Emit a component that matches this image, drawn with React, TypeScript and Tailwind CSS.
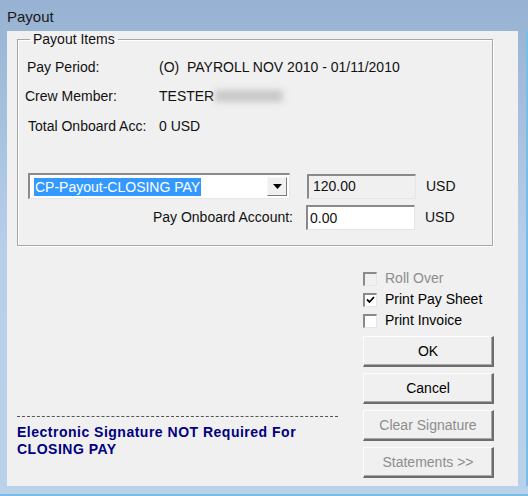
import React from "react";

const font = { fontFamily: '"Liberation Sans", Arial, sans-serif' };

// ── Win32 bits ────────────────────────────────────────────────────────────────

function Sunken({ className = "", children }: { className?: string; children?: React.ReactNode }) {
  return (
    <div
      className={`border-t-2 border-l-2 border-b border-r border-t-[#8a8a8a] border-l-[#8a8a8a] border-b-[#e6e6e6] border-r-[#e6e6e6] ${className}`}
    >
      {children}
    </div>
  );
}

function Check({ label, checked = false, disabled = false }: { label: string; checked?: boolean; disabled?: boolean }) {
  return (
    <div className="h-[21px] flex items-center gap-[8px]">
      <div
        className={`w-[14px] h-[14px] flex items-center justify-center border-t-2 border-l-2 border-b border-r border-t-[#8a8a8a] border-l-[#8a8a8a] border-b-[#e6e6e6] border-r-[#e6e6e6] ${
          disabled ? "bg-[#f0f0f0]" : "bg-white"
        }`}
      >
        {checked && (
          <svg width="9" height="8" viewBox="0 0 9 8">
            <path d="M1 3.5 L3.5 6 L8 1" stroke="#000" strokeWidth="1.8" fill="none" />
          </svg>
        )}
      </div>
      <span className={disabled ? "text-[#8d8d8d]" : "text-black"}>{label}</span>
    </div>
  );
}

function Btn({ label, disabled = false }: { label: string; disabled?: boolean }) {
  return (
    <div
      className={`h-[31px] w-[131px] flex items-center justify-center bg-[#f0f0f0] border-t border-l border-b-2 border-r-2 border-t-[#fdfdfd] border-l-[#fdfdfd] border-b-[#6d6d6d] border-r-[#6d6d6d] shadow-[inset_-1px_-1px_0_#a8a8a8] ${
        disabled ? "text-[#8d8d8d]" : "text-black"
      }`}
    >
      {label}
    </div>
  );
}

// ── Page ──────────────────────────────────────────────────────────────────────

export default function App() {
  return (
    <div
      className="w-[528px] h-[496px] flex flex-col bg-gradient-to-b from-[#97b2d2] via-[#b7cfe9] to-[#bad1ea] text-[14px] leading-[17px] text-[#111]"
      style={font}
    >
      {/* title */}
      <div className="h-[31px] shrink-0 pl-[7px] flex items-center text-[15px] text-[#1a1a1a] pt-[2px]">Payout</div>

      <div className="flex-1 flex">
        <div className="ml-[7px] w-[511px] h-[455px] bg-[#f0f0f0] pl-[10px]">
          {/* ── Payout Items ── */}
          <fieldset className="w-[476px] h-[215px] border border-[#a7a7a7] shadow-[inset_1px_1px_0_#fff,1px_1px_0_#fff]">
            <legend className="ml-[12px] px-[3px] text-[#111]">Payout Items</legend>

            <div className="flex flex-col pl-[9px]">
              <div className="mt-[9px] h-[20px] flex items-center">
                <span className="w-[132px]">Pay Period:</span>
                <span>(O)&nbsp; PAYROLL NOV 2010 - 01/11/2010</span>
              </div>
              <div className="mt-[9px] h-[20px] flex items-center">
                <span className="w-[132px] -ml-[2px]">Crew Member:</span>
                <span className="ml-[2px]">TESTER</span>
                <span className="ml-[1px] w-[68px] h-[12px] bg-[#c9c9c9] blur-[3px]" />
              </div>
              <div className="mt-[10px] h-[20px] flex items-center">
                <span className="w-[132px] ml-[1px] -mr-[1px]">Total Onboard Acc:</span>
                <span>0 USD</span>
              </div>

              <div className="mt-[37px] flex items-center">
                <Sunken className="w-[262px] h-[26px] ml-[1px] bg-white flex items-center justify-between pl-[4px] pr-[2px]">
                  <span className="bg-[#3399ff] text-white px-[1px] leading-[18px]">CP-Payout-CLOSING PAY</span>
                  <div className="w-[20px] h-[19px] flex items-center justify-center bg-[#f0f0f0] border-t border-l border-b border-r border-t-[#f8f8f8] border-l-[#f8f8f8] border-b-[#7a7a7a] border-r-[#7a7a7a]">
                    <svg width="9" height="5" viewBox="0 0 9 5">
                      <path d="M0 0 H9 L4.5 5 Z" fill="#000" />
                    </svg>
                  </div>
                </Sunken>
                <Sunken className="ml-[17px] w-[109px] h-[25px] bg-[#f0f0f0] flex items-center pl-[4px]">120.00</Sunken>
                <span className="ml-[10px]">USD</span>
              </div>

              <div className="mt-[6px] flex items-center">
                <span className="w-[266px] text-right">Pay Onboard Account:</span>
                <Sunken className="ml-[13px] w-[109px] h-[25px] bg-white flex items-center pl-[2px]">0.00</Sunken>
                <span className="ml-[10px]">USD</span>
              </div>
            </div>
          </fieldset>

          {/* ── Bottom ── */}
          <div className="mt-[22px] flex">
            <div className="w-[321px] pt-[148px] flex flex-col">
              <div className="border-t border-dashed border-[#555]" />
              <p className="mt-[7px] font-bold text-[#000080] text-[14px] leading-[17px] tracking-[0.5px]">
                Electronic Signature NOT Required For
                <br />
                CLOSING PAY
              </p>
            </div>

            <div className="ml-[25px] flex flex-col">
              <Check label="Roll Over" disabled />
              <Check label="Print Pay Sheet" checked />
              <Check label="Print Invoice" />
              <div className="mt-[5px] flex flex-col gap-[6px]">
                <Btn label="OK" />
                <Btn label="Cancel" />
                <Btn label="Clear Signature" disabled />
                <Btn label="Statements >>" disabled />
              </div>
            </div>
          </div>
        </div>
        <div className="flex-1 border-r-2 border-[#79bde6]" />
      </div>
      <div className="h-[10px] shrink-0 border-b-2 border-[#79bde6]" />
    </div>
  );
}
